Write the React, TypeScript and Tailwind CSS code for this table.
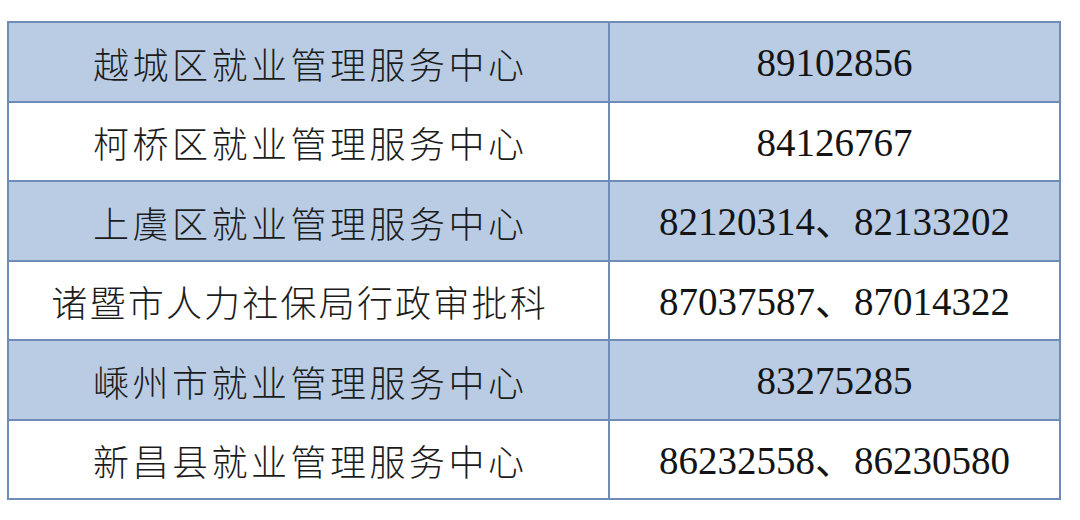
import React from "react";

const rows: { name: string; phone: string; blue: boolean; wide?: boolean }[] = [
  { name: "越城区就业管理服务中心", phone: "89102856", blue: true },
  { name: "柯桥区就业管理服务中心", phone: "84126767", blue: false },
  { name: "上虞区就业管理服务中心", phone: "82120314、82133202", blue: true },
  { name: "诸暨市人力社保局行政审批科", phone: "87037587、87014322", blue: false, wide: true },
  { name: "嵊州市就业管理服务中心", phone: "83275285", blue: true },
  { name: "新昌县就业管理服务中心", phone: "86232558、86230580", blue: false },
];

export default function App() {
  return (
    <div className="w-[1080px] h-[520px] bg-white pl-[7px] pt-[21px]">
      <div className="w-[1054px] bg-[#6f8cb8] p-[2px] grid grid-cols-[599px_449px] auto-rows-[77.5px] gap-[2px]">
        {rows.map((r, i) => (
          <React.Fragment key={i}>
            <div
              className={`flex items-center justify-center pt-[2px] ${r.blue ? "bg-[#b9cce4]" : "bg-white"} ${r.wide ? "pr-[20px]" : ""}`}
            >
              <span
                className={`text-[36px] leading-none text-[#1c1c1c] font-light ${r.wide ? "tracking-[2.2px] pl-[2.2px]" : "tracking-[3.5px] pl-[3.5px]"}`}
                style={{ fontFamily: '"Noto Sans CJK SC", "Noto Sans CJK JP", sans-serif' }}
              >
                {r.name}
              </span>
            </div>
            <div
              className={`flex items-center justify-center pt-[2px] ${r.blue ? "bg-[#b9cce4]" : "bg-white"}`}
            >
              <span
                className="text-[39px] leading-none text-[#141414]"
                style={{ fontFamily: '"Liberation Serif", "Noto Sans CJK SC", serif' }}
              >
                {r.phone}
              </span>
            </div>
          </React.Fragment>
        ))}
      </div>
    </div>
  );
}
